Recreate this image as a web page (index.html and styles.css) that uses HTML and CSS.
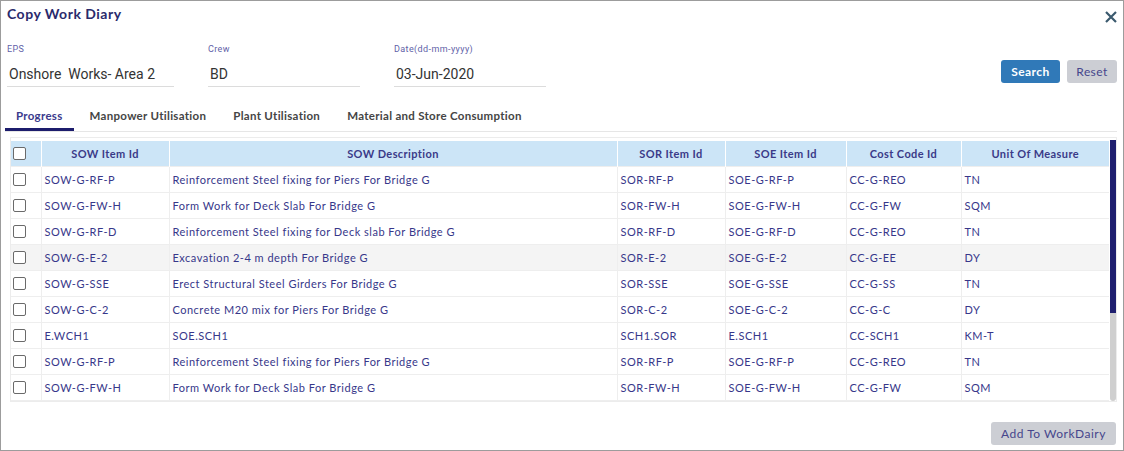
FILE: index.html
```html
<!DOCTYPE html>
<html>
<head>
<meta charset="utf-8">
<link rel="stylesheet" href="styles.css">
</head>
<body>
<div class="dialog">
  <div class="head">
    <div class="title">Copy Work Diary</div>
    <svg class="close" width="12" height="12" viewBox="0 0 12 12"><path d="M1 1 L11 11 M11 1 L1 11" stroke="#3b5a6e" stroke-width="2.2" stroke-linecap="butt"/></svg>
  </div>
  <div class="form">
    <div class="field f-eps">
      <div class="label">EPS</div>
      <div class="value">Onshore&nbsp; Works- Area 2</div>
    </div>
    <div class="field">
      <div class="label">Crew</div>
      <div class="value">BD</div>
    </div>
    <div class="field">
      <div class="label">Date(dd-mm-yyyy)</div>
      <div class="value">03-Jun-2020</div>
    </div>
    <div class="actions">
      <button class="btn btn-primary">Search</button>
      <button class="btn btn-grey">Reset</button>
    </div>
  </div>
  <div class="tabs">
    <div class="tab active">Progress</div>
    <div class="tab">Manpower Utilisation</div>
    <div class="tab">Plant Utilisation</div>
    <div class="tab">Material and Store Consumption</div>
  </div>
  <div class="grid-wrap">
    <table class="grid">
      <colgroup>
        <col style="width:30px"><col style="width:128px"><col style="width:448px"><col style="width:108px"><col style="width:121px"><col style="width:115px"><col style="width:148px">
      </colgroup>
      <thead>
        <tr><th><span class="cb"></span></th><th>SOW Item Id</th><th>SOW Description</th><th>SOR Item Id</th><th>SOE Item Id</th><th>Cost Code Id</th><th>Unit Of Measure</th></tr>
      </thead>
      <tbody>
        <tr><td><span class="cb"></span></td><td>SOW-G-RF-P</td><td>Reinforcement Steel fixing for Piers For Bridge G</td><td>SOR-RF-P</td><td>SOE-G-RF-P</td><td>CC-G-REO</td><td>TN</td></tr>
        <tr><td><span class="cb"></span></td><td>SOW-G-FW-H</td><td>Form Work for Deck Slab For Bridge G</td><td>SOR-FW-H</td><td>SOE-G-FW-H</td><td>CC-G-FW</td><td>SQM</td></tr>
        <tr><td><span class="cb"></span></td><td>SOW-G-RF-D</td><td>Reinforcement Steel fixing for Deck slab For Bridge G</td><td>SOR-RF-D</td><td>SOE-G-RF-D</td><td>CC-G-REO</td><td>TN</td></tr>
        <tr class="hover"><td><span class="cb"></span></td><td>SOW-G-E-2</td><td>Excavation 2-4 m depth For Bridge G</td><td>SOR-E-2</td><td>SOE-G-E-2</td><td>CC-G-EE</td><td>DY</td></tr>
        <tr><td><span class="cb"></span></td><td>SOW-G-SSE</td><td>Erect Structural Steel Girders For Bridge G</td><td>SOR-SSE</td><td>SOE-G-SSE</td><td>CC-G-SS</td><td>TN</td></tr>
        <tr><td><span class="cb"></span></td><td>SOW-G-C-2</td><td>Concrete M20 mix for Piers For Bridge G</td><td>SOR-C-2</td><td>SOE-G-C-2</td><td>CC-G-C</td><td>DY</td></tr>
        <tr><td><span class="cb"></span></td><td>E.WCH1</td><td>SOE.SCH1</td><td>SCH1.SOR</td><td>E.SCH1</td><td>CC-SCH1</td><td>KM-T</td></tr>
        <tr><td><span class="cb"></span></td><td>SOW-G-RF-P</td><td>Reinforcement Steel fixing for Piers For Bridge G</td><td>SOR-RF-P</td><td>SOE-G-RF-P</td><td>CC-G-REO</td><td>TN</td></tr>
        <tr><td><span class="cb"></span></td><td>SOW-G-FW-H</td><td>Form Work for Deck Slab For Bridge G</td><td>SOR-FW-H</td><td>SOE-G-FW-H</td><td>CC-G-FW</td><td>SQM</td></tr>
      </tbody>
    </table>
    <div class="scrollbar"><div class="thumb"></div></div>
  </div>
  <button class="btn btn-grey btn-add">Add To WorkDairy</button>
</div>
</body>
</html>
```
FILE: styles.css
```css
html, body {
  margin: 0;
  padding: 0;
  background: #fff;
}
body {
  font-family: Lato, "Open Sans", sans-serif;
}
.dialog {
  width: 1124px;
  height: 451px;
  box-sizing: border-box;
  border: 1px solid #9c9c9c;
  padding: 5px 6px 0 6px;
  display: flex;
  flex-direction: column;
}
.head {
  display: flex;
  justify-content: space-between;
  align-items: flex-start;
}
.title {
  font-size: 14px;
  line-height: 16px;
  font-weight: 700;
  color: #2a2a6c;
  letter-spacing: 0.5px;
}
.close {
  margin-top: 5px;
  margin-right: 0;
}
.form {
  display: flex;
  align-items: flex-start;
  margin-top: 21px;
}
.field {
  width: 152px;
  margin-right: 34px;
}
.field.f-eps {
  width: 167px;
}
.label {
  font-family: Roboto, sans-serif;
  font-size: 9px;
  line-height: 11px;
  color: #5f5fa8;
  letter-spacing: 0.4px;
}
.value {
  font-family: Roboto, sans-serif;
  font-size: 14px;
  line-height: 16px;
  color: #333;
  height: 32px;
  box-sizing: border-box;
  padding: 11px 0 0 2px;
  border-bottom: 1px solid #dcdcdc;
}
.actions {
  margin-left: auto;
  margin-top: 16px;
  display: flex;
  gap: 7px;
}
.btn {
  font-family: Lato, sans-serif;
  font-size: 12px;
  letter-spacing: 0.4px;
  height: 23px;
  border: none;
  border-radius: 3px;
  padding: 0;
  cursor: pointer;
}
.btn-primary {
  width: 59px;
  background: #3079b8;
  color: #fff;
  font-weight: 700;
}
.btn-grey {
  width: 50px;
  background: #ccced4;
  color: #46468c;
}
.tabs {
  display: flex;
  gap: 5px;
  margin: 13px 0 0 -2px;
  border-bottom: 1px solid #e6e6e6;
}
.tab {
  padding: 9px 11px 5px;
  font-size: 11.5px;
  line-height: 14px;
  font-weight: 700;
  color: #454545;
  letter-spacing: 0.3px;
  border-bottom: 3px solid transparent;
}
.tab.active {
  color: #3a3a8c;
  border-bottom-color: #1c1c6c;
}
.grid-wrap {
  display: flex;
  align-self: flex-start;
  margin: 5px 0 0 3px;
  border: 1px solid #ececec;
  padding-top: 3px;
  gap: 1px;
}
.grid {
  width: 1098px;
  table-layout: fixed;
  border-collapse: collapse;
  font-size: 11px;
  color: #37378a;
  letter-spacing: 0.5px;
}
.grid th {
  background: #cce5f7;
  height: 25px;
  padding: 0;
  font-weight: 700;
  text-align: center;
  border-left: 1px solid #fff;
  color: #3a3a88;
  letter-spacing: 0.4px;
}
.grid th:first-child, .grid td:first-child {
  border-left: none;
  text-align: left;
  padding-left: 2px;
}
.grid td {
  height: 25px;
  padding: 0 0 0 3px;
  border-left: 1px solid #eeeeee;
  border-bottom: 1px solid #eeeeee;
  white-space: nowrap;
  overflow: hidden;
}
.grid tbody tr:first-child td {
  border-top: 1px solid #eeeeee;
}
.grid tr.hover td {
  background: #f4f4f4;
}
.cb {
  display: block;
  width: 11px;
  height: 11px;
  border: 1px solid #6a6a6a;
  border-radius: 2px;
  background: #fff;
}
.scrollbar {
  width: 6px;
  margin-top: -1px;
  height: 261px;
  background: #cfcfcf;
  border-radius: 0 0 3px 3px;
  display: flex;
  flex-direction: column;
}
.thumb {
  height: 173px;
  background: #1e1e6e;
}
.btn-add {
  width: 125px;
  font-size: 12px;
  letter-spacing: 0.5px;
  align-self: flex-end;
  margin: auto 1px 5px 0;
}
```
